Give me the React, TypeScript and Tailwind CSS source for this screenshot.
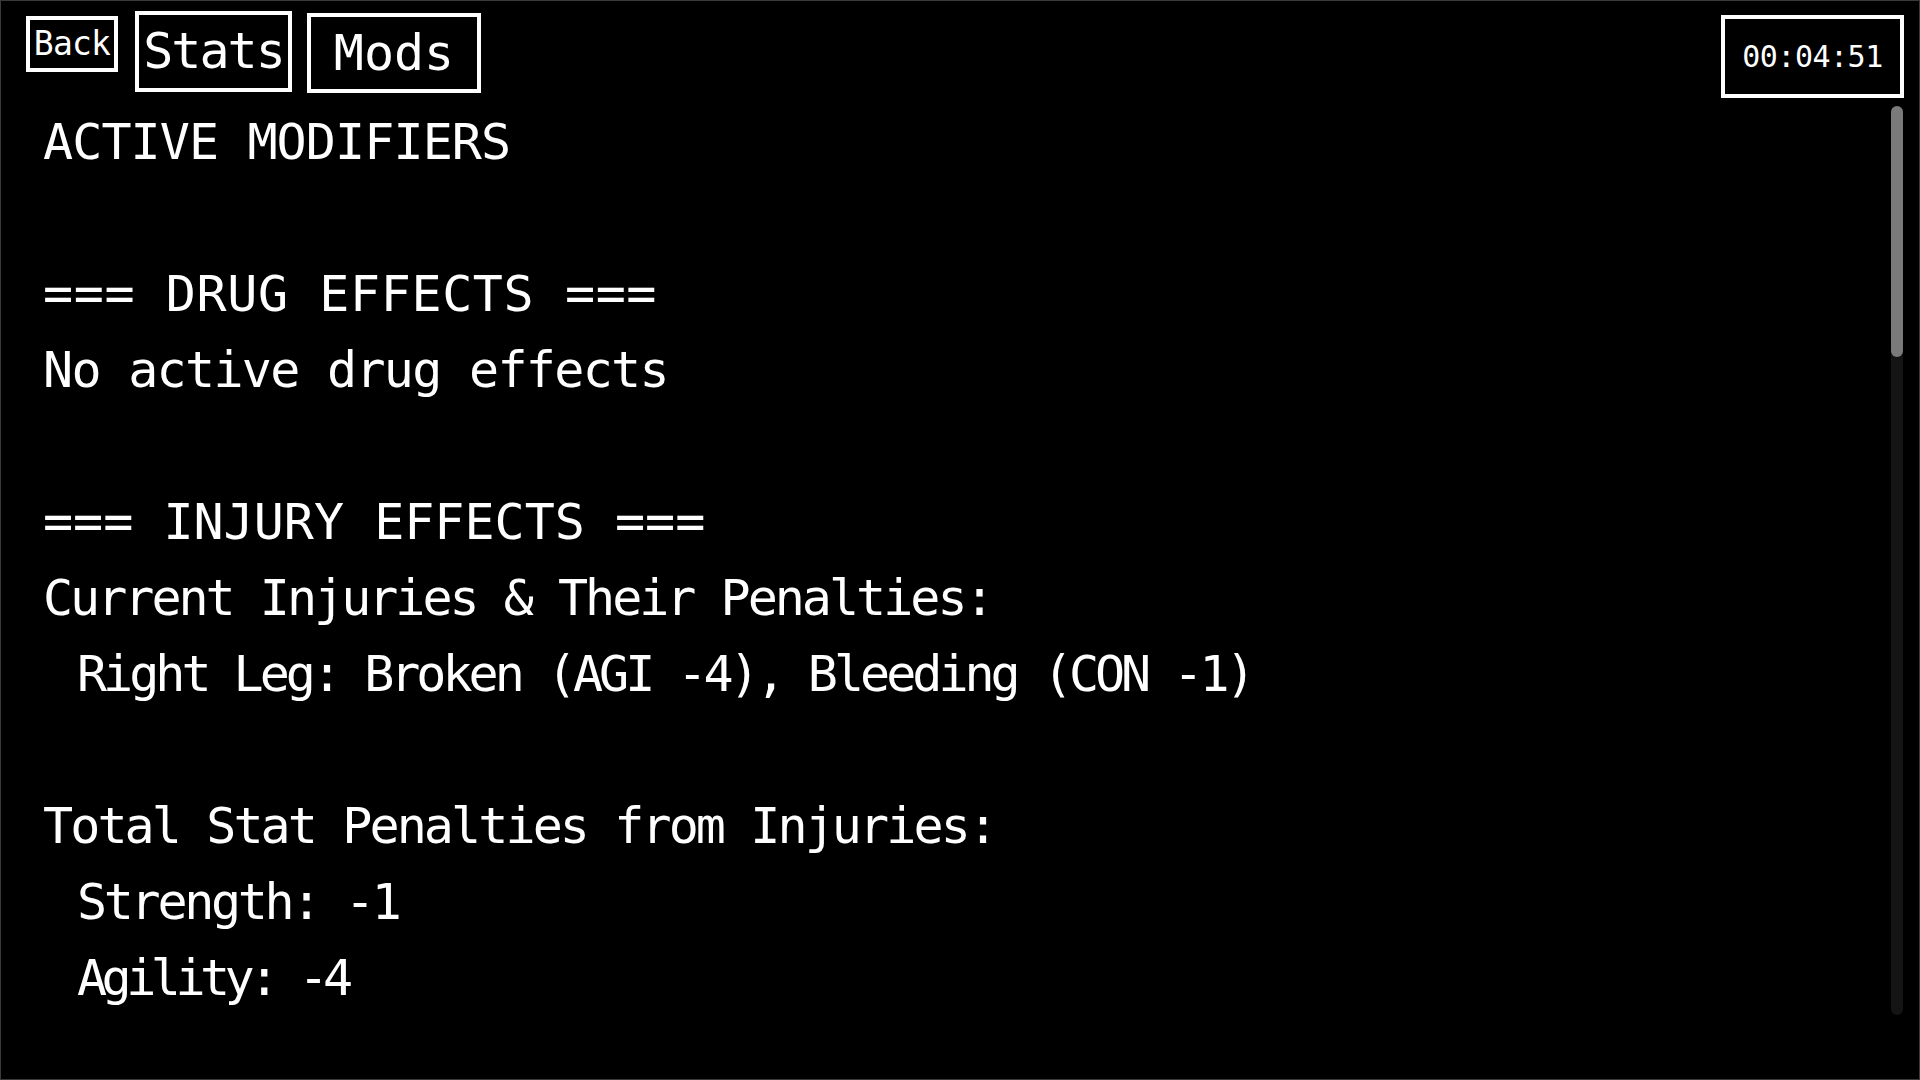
import React from 'react'

const mono = { fontFamily: '"DejaVu Sans Mono", "Liberation Mono", monospace' }

// per-line tracking to approximate the proportional pixel font widths
type Line = { text: string; track: string; indent?: boolean }

const lines: Array<Line | null> = [
  { text: 'ACTIVE MODIFIERS', track: 'tracking-[-0.9px]' },
  null,
  { text: '=== DRUG EFFECTS ===', track: 'tracking-[0.6px]' },
  { text: 'No active drug effects', track: 'tracking-[-1.7px]' },
  null,
  { text: '=== INJURY EFFECTS ===', track: 'tracking-[0px]' },
  { text: 'Current Injuries & Their Penalties:', track: 'tracking-[-3px]' },
  { text: 'Right Leg: Broken (AGI -4), Bleeding (CON -1)', track: 'tracking-[-4px]', indent: true },
  null,
  { text: 'Total Stat Penalties from Injuries:', track: 'tracking-[-2.9px]' },
  { text: 'Strength: -1', track: 'tracking-[-3.3px]', indent: true },
  { text: 'Agility: -4', track: 'tracking-[-5.5px]', indent: true },
]

function TabButton({ label, className }: { label: string; className: string }) {
  return (
    <button className={`border-4 border-white bg-black text-white flex items-center justify-center whitespace-nowrap ${className}`}>
      {label}
    </button>
  )
}

export default function App() {
  return (
    <div className="w-[1920px] h-[1080px] bg-black border border-[#3a3a3a] flex flex-col overflow-hidden text-white" style={mono}>
      {/* top bar */}
      <div className="h-[103px] flex items-start justify-between pl-[25px] pr-[15px]">
        <div className="flex items-start">
          <TabButton label="Back" className="mt-[15px] w-[92px] h-[56px] text-[33px] tracking-[-0.8px]" />
          <TabButton label="Stats" className="ml-[17px] mt-[10px] w-[157px] h-[81px] text-[50px] tracking-[-2px]" />
          <TabButton label="Mods" className="ml-[15px] mt-[12px] w-[174px] h-[80px] text-[50px]" />
        </div>
        <div className="mt-[14px] w-[183px] h-[83px] border-4 border-white flex items-center justify-center text-[30px] tracking-[-0.5px]">
          00:04:51
        </div>
      </div>

      {/* body */}
      <div className="flex-1 flex">
        <div className="flex-1 pl-[42px] text-[50px] whitespace-pre">
          {lines.map((l, i) =>
            l ? (
              <div key={i} className={`h-[76px] leading-[76px] ${l.track} ${l.indent ? 'pl-[34px]' : ''}`}>{l.text}</div>
            ) : (
              <div key={i} className="h-[76px]" />
            )
          )}
        </div>
        <div className="mt-[2px] mr-[16px] w-[12px] h-[909px] rounded-full bg-[#141414]">
          <div className="h-[251px] rounded-full bg-[#7a7a7a]" />
        </div>
      </div>
    </div>
  )
}
